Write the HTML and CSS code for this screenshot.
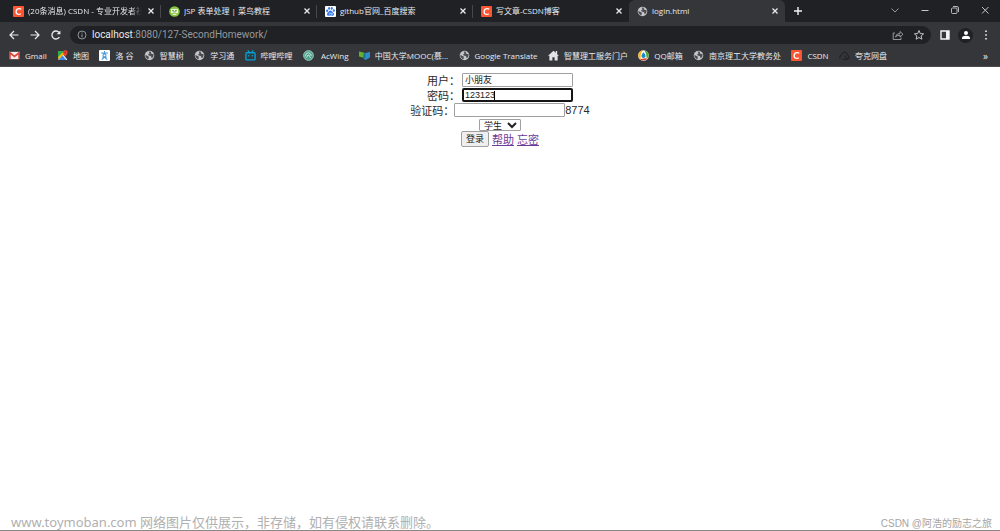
FILE: index.html
```html
<!DOCTYPE html>
<html lang="zh-CN">
<head>
<meta charset="utf-8">
<title>login.html</title>
<link rel="stylesheet" href="styles.css">
</head>
<body>
<svg class="defs" aria-hidden="true">
  <symbol id="csdn" viewBox="0 0 12 12"><rect width="12" height="12" rx="1" fill="#fc5531"/><path d="M9 3.6Q8 2.9 6.7 2.9Q3.7 2.9 3.4 6Q3.2 9.1 6 9.1Q7.5 9.1 8.5 8.4" fill="none" stroke="#fff" stroke-width="1.5"/></symbol>
  <symbol id="globe" viewBox="0 0 12 12"><circle cx="6" cy="6" r="5.2" fill="#c4c7c9"/><path d="M1.6 5.2 3.8 6.5 5.2 7.2 5 10.2 3.4 9.6 1.6 7.6ZM5 1.7 7.9 1.9 7.2 3.2 8.8 4.3 10.3 4.4 10.4 6.6 9 8.8 7.8 8.3 7.8 6.9 5.2 6 4.4 4.8 6 3.8Z" fill="#4b4d51"/></symbol>
  <symbol id="close" viewBox="0 0 8 8"><path d="M1.5 1.5 6.5 6.5M6.5 1.5 1.5 6.5" stroke="#e8eaed" stroke-width="1.3"/></symbol>
</svg>
<header class="browser">
  <div class="tabstrip">
    <div class="tab"><svg class="icon"><use href="#csdn"/></svg><span class="title fade">(20条消息) CSDN - 专业开发者社</span><button class="close" aria-label="关闭"><svg><use href="#close"/></svg></button></div>
    <div class="tab"><svg class="icon" viewBox="0 0 12 12"><circle cx="6" cy="6" r="5.8" fill="#87c540"/><path d="M2.2 3.2h7.6v4.6H2.2Z" fill="#f5fbe9"/><path d="M3.3 4.8h2.2M6.5 4.8h2.2M4 6.4h4" stroke="#4d8b2b" stroke-width=".9"/><path d="M4 9.2H8" stroke="#f5fbe9"/></svg><span class="title">JSP 表单处理 | 菜鸟教程</span><button class="close" aria-label="关闭"><svg><use href="#close"/></svg></button></div>
    <div class="tab"><svg class="icon" viewBox="0 0 12 12"><rect width="12" height="12" rx="1" fill="#fff"/><g fill="#2f79ef"><ellipse cx="2.4" cy="5.3" rx="1.2" ry="1.5"/><ellipse cx="4.5" cy="2.7" rx="1.1" ry="1.5"/><ellipse cx="7.4" cy="2.7" rx="1.1" ry="1.5"/><ellipse cx="9.7" cy="5" rx="1.1" ry="1.5"/><path d="M6 4.8C7.8 4.8 8 6.5 9.4 7.7 10.7 9 9.6 11 7.8 10.7 6.5 10.4 5.5 10.4 4.2 10.7 2.4 11 1.3 9 2.7 7.7 4 6.5 4.2 4.8 6 4.8Z"/></g><path d="M4.2 8.7H5.5V7.2M6.7 7.4V9H8V7.4" stroke="#fff" stroke-width=".6" fill="none"/></svg><span class="title">github官网_百度搜索</span><button class="close" aria-label="关闭"><svg><use href="#close"/></svg></button></div>
    <div class="tab plain"><svg class="icon"><use href="#csdn"/></svg><span class="title">写文章-CSDN博客</span><button class="close" aria-label="关闭"><svg><use href="#close"/></svg></button></div>
    <div class="tab active"><svg class="icon"><use href="#globe"/></svg><span class="title">login.html</span><button class="close" aria-label="关闭"><svg><use href="#close"/></svg></button></div>
    <button class="newtab" aria-label="新标签页"><svg viewBox="0 0 10 10"><path d="M5 1V9M1 5H9" stroke="#f1f3f4" stroke-width="1.4"/></svg></button>
    <div class="winctl">
      <button aria-label="搜索标签页"><svg viewBox="0 0 10 10"><path d="M1.5 3.5 5 7 8.5 3.5" stroke="#96989b"/></svg></button>
      <button aria-label="最小化"><svg viewBox="0 0 10 10"><path d="M1.5 5.5H8.5" stroke="#c5c7ca"/></svg></button>
      <button aria-label="还原"><svg viewBox="0 0 10 10"><rect x="1.5" y="3" width="5.5" height="5.5" rx="1" stroke="#c5c7ca" stroke-width=".9"/><path d="M3 1.5H7Q8.5 1.5 8.5 3V7" stroke="#c5c7ca" stroke-width=".9"/></svg></button>
      <button aria-label="关闭窗口"><svg viewBox="0 0 10 10"><path d="M2 2 8.5 8.5M8.5 2 2 8.5" stroke="#c5c7ca"/></svg></button>
    </div>
  </div>
  <div class="toolbar">
    <div class="nav">
      <button aria-label="后退"><svg viewBox="0 0 12 12"><path d="M10.5 6H2M6 2 2 6 6 10" stroke="#e8eaed" stroke-width="1.2"/></svg></button>
      <button aria-label="前进"><svg viewBox="0 0 12 12"><path d="M1.5 6H10M6 2 10 6 6 10" stroke="#e8eaed" stroke-width="1.2"/></svg></button>
      <button aria-label="刷新"><svg viewBox="0 0 12 12"><path d="M9.4 8A4 4 0 1 1 9 3.4L10 4.6" stroke="#e8eaed" stroke-width="1.3"/><path d="M10.4 1.5V5.3H6.6Z" fill="#e8eaed"/></svg></button>
    </div>
    <div class="address">
      <svg class="info" viewBox="0 0 10 10"><circle cx="5" cy="5" r="4" stroke="#9aa0a6" stroke-width=".9"/><path d="M5 4.4V7.3M5 2.6V3.5" stroke="#9aa0a6"/></svg>
      <span class="url"><span class="host">localhost</span>:8080/127-SecondHomework/</span>
      <button aria-label="分享"><svg viewBox="0 0 12 12"><path d="M3 4H1.2V10.5H9V8.5M3.5 8Q4 4.5 8 4.5V2.5L11 5.3 8 8V6.2Q5 6.2 3.5 8Z" stroke="#a3a5a8" stroke-width=".9"/></svg></button>
      <button aria-label="收藏"><svg viewBox="0 0 12 12"><path d="M6 1.5 7.3 4.6 10.6 4.8 8.1 7 8.9 10.2 6 8.5 3.1 10.2 3.9 7 1.4 4.8 4.7 4.6Z" stroke="#c2c4c7"/></svg></button>
    </div>
    <div class="tools">
      <button aria-label="侧边栏"><svg viewBox="0 0 12 12"><path d="M2 2H10V10H2ZM7.8 2V10" stroke="#f1f3f4" stroke-width="1.4"/><path d="M7.2 2H10V10H7.2Z" fill="#f1f3f4"/></svg></button>
      <button class="avatar" aria-label="用户"><svg viewBox="0 0 12 12"><circle cx="6" cy="4" r="2" fill="#fff"/><path d="M2 10V8.8Q2.2 6.8 6 6.8 9.8 6.8 10 8.8V10Z" fill="#fff"/></svg></button>
      <button aria-label="菜单"><svg viewBox="0 0 12 12"><path d="M5.2 1.5H6.8V3.1H5.2ZM5.2 5.2H6.8V6.8H5.2ZM5.2 8.9H6.8V10.5H5.2Z" fill="#f1f3f4"/></svg></button>
    </div>
  </div>
  <nav class="bookmarks">
    <div class="links">
    <a href="#"><svg viewBox="0 0 12 12"><path d="M1 2H11V10H1Z" fill="#f4eeee"/><path d="M1 10V3L6 7 11 3V10" fill="none" stroke="#db4437" stroke-width="1.8"/></svg>Gmail</a>
    <a href="#"><svg viewBox="0 0 12 12"><path d="M1 1H7L6 6 1 10Z" fill="#34a853"/><path d="M1 11 7 5 11 10V11Z" fill="#e8e8e8"/><path d="M2 11 6 6 10 11Z" fill="#4285f4"/><path d="M1 8 7 2 8 4 2 10Z" fill="#fbbc04"/><path d="M9 .3A2.5 2.5 0 0 1 11.5 3Q11.3 4.5 9 7.2 6.7 4.5 6.5 3A2.5 2.5 0 0 1 9 .3Z" fill="#ea4335"/><circle cx="9" cy="2.8" r=".8" fill="#8e2118"/></svg>地图</a>
    <a href="#"><svg viewBox="0 0 12 12"><rect width="12" height="12" rx="1" fill="#fff"/><path d="M2.3 3.2H9.8M6 1.2V3M4 3.5Q8.5 4 7.5 6.4L3 10.6M7 4Q3.5 5 4.5 6.5L9 10.5M3.5 8H8.5" stroke="#4a9bdd" stroke-width="1.1" fill="none"/></svg>洛 谷</a>
    <a href="#"><svg><use href="#globe"/></svg>智慧树</a>
    <a href="#"><svg><use href="#globe"/></svg>学习通</a>
    <a href="#"><svg viewBox="0 0 12 12"><rect x="1" y="3" width="10" height="7.8" rx="1" stroke="#00a1d6" stroke-width="1.5" fill="none"/><path d="M3 .5 4.7 2.5M9 .5 7.3 2.5M4 5.5V7.2M8 5.5V7.2" stroke="#00a1d6" stroke-width="1.3"/></svg>哔哩哔哩</a>
    <a href="#"><svg viewBox="0 0 12 12"><circle cx="6" cy="6" r="5.3" fill="#4ca08b" stroke="#a5d6c8"/><path d="M2.5 7Q3 3 6 3 9 3.5 9 6.5M4 8.5Q4.5 5 6.5 5.5 7 7 8.5 9" stroke="#d5eee2" fill="none"/></svg>&nbsp;AcWing</a>
    <a href="#"><svg viewBox="0 0 12 12"><path d="M0 1.5 6 3V8.8L0 7Z" fill="#62b22f"/><path d="M5 4 12 2V8.3L7 11 5 9.5Z" fill="#2d8ccd"/><path d="M5 4 6.8 3.5V9L5 9.5Z" fill="#176f83"/></svg>中国大学MOOC(慕...</a>
    <a href="#"><svg><use href="#globe"/></svg>Google Translate</a>
    <a href="#"><svg viewBox="0 0 12 12"><path d="M0 6.4 6 .8 8.5 3V1H10V4.5L12 6.4H10.5V11.5H7.2V8H4.8V11.5H1.5V6.4Z" fill="#e1e3e4"/></svg>智慧理工服务门户</a>
    <a href="#"><svg viewBox="0 0 12 12"><circle cx="6" cy="6" r="5.8" fill="#fff"/><path d="M5 .3Q0 1.8.3 6.5.8 9.5 3.5 11 1.5 6 5 .3Z" fill="#f9b51b"/><path d="M7 .3Q12 2 11.7 7L9.5 9.5Q9.5 4 7 .3Z" fill="#50a92b"/><path d="M2 10Q6 12.8 10.5 9.5L8 9Z" fill="#e4392b"/><path d="M6 2.5Q9.2 6 7.8 8 6 9.6 4.2 8 2.8 6 6 2.5Z" fill="#1687ce"/></svg>QQ邮箱</a>
    <a href="#"><svg><use href="#globe"/></svg>南京理工大学教务处</a>
    <a href="#"><svg><use href="#csdn"/></svg>CSDN</a>
    <a href="#"><svg viewBox="0 0 12 12"><path d="M1.3 9.5Q.3 7.5 2 6L4.5 3Q6 1.5 7.8 3L10.5 6.8Q11.5 8.8 9.5 10H4M5.5 6 9.5 10" stroke="#202124" stroke-width="1.1" fill="none"/></svg>夸克网盘</a>
    </div>
    <button class="more" aria-label="更多书签">»</button>
  </nav>
</header>
<main class="page">
  <form class="login">
    <div class="row"><label for="user">用户：</label> <input id="user" class="spaced" type="text" value="小朋友"></div>
    <div class="row"><label for="pwd">密码：</label> <span class="field spaced"><input id="pwd" class="focused" type="text" value="123123"><i class="caret"></i></span></div>
    <div class="row"><label for="code">验证码：</label><input id="code" type="text"><span>8774</span></div>
    <div class="row"><select aria-label="身份"><option>学生</option></select></div>
    <div class="row"><button type="button">登录</button> <a href="#">帮助</a> <a href="#">忘密</a></div>
  </form>
</main>
<footer class="marks"><span class="site">www.toymoban.com 网络图片仅供展示，非存储，如有侵权请联系删除。</span><span class="author">CSDN @阿浩的励志之旅</span></footer>
</body>
</html>
```
FILE: styles.css
```css
* { box-sizing: border-box; }
body {
  margin: 0;
  min-height: 100vh;
  display: flex;
  flex-direction: column;
  background: #fff;
  color: #2b2b2b;
  font-family: "Liberation Sans", "Noto Sans CJK SC", sans-serif;
  border-bottom: 1px solid #8b8789;
}
button { border: 0; padding: 0; background: none; color: inherit; font: inherit; }
svg { display: block; fill: none; }
.defs { position: absolute; width: 0; height: 0; }

.browser {
  background: #35363a;
  border-bottom: 1px solid #4b4a4e;
  color: #e8eaed;
  font: 8px/12px "Open Sans", "Noto Sans CJK SC", sans-serif;
}
.browser button { display: flex; align-items: center; justify-content: center; flex: none; }
.tabstrip { display: flex; height: 22px; background: #202124; padding-left: 5px; }
.tab { position: relative; display: flex; align-items: center; flex: 0 1 156px; min-width: 0; padding: 0 6px 0 8px; }
.tab::after { content: ""; position: absolute; right: 0; top: 5px; width: 1px; height: 13px; background: #47484c; }
.tab.plain::after, .tab.active::after { display: none; }
.tab.active { background: #35363a; border-radius: 6px 6px 0 0; }
.icon { width: 11px; height: 11px; flex: none; }
.title { flex: 1; min-width: 0; margin: 0 5px 0 4px; white-space: nowrap; overflow: hidden; }
.fade { mask-image: linear-gradient(to right, #000 90%, transparent); }
.close, .close svg { width: 8px; height: 8px; }
.newtab { width: 26px; }
.newtab svg { width: 10px; height: 10px; }
.winctl { display: flex; align-items: center; margin-left: auto; padding: 0 10px 2px 0; gap: 20px; }
.winctl svg { width: 10px; height: 10px; }

.toolbar { display: flex; align-items: center; height: 24px; padding: 2px 8px 0; }
.nav { display: flex; gap: 9px; width: 62px; }
.nav svg, .address button svg, .tools svg { width: 12px; height: 12px; }
.address { flex: 1; display: flex; align-items: center; gap: 9px; height: 18px; padding: 0 6px 0 7px; border-radius: 9px; background: #202124; }
.info { width: 10px; height: 10px; }
.url { flex: 1; margin-left: -4px; color: #96999d; font-family: Roboto, sans-serif; font-size: 10px; }
.host { color: #e8eaed; }
.tools { display: flex; align-items: center; gap: 7px; margin-left: 8px; }
.avatar { width: 15px; height: 15px; border-radius: 50%; background: #202124; }

.bookmarks { display: flex; align-items: center; justify-content: space-between; height: 20px; padding: 0 12px 1px 9px; white-space: nowrap; }
.links { display: flex; justify-content: space-between; flex: 0 1 878px; }
.bookmarks a { display: flex; align-items: center; gap: 5px; color: inherit; text-decoration: none; }
.bookmarks svg { width: 11px; height: 11px; flex: none; }
.more { font-size: 10px; }

.page { flex: 1; padding-top: 5px; font-size: 11px; }
.row { display: flex; justify-content: center; align-items: center; height: 15px; white-space: pre; }
.row:last-child { gap: 3px; height: 14px; }
.login input { width: 111px; height: 14px; padding: 0 2px; border: 1px solid #a0a0a0; border-radius: 1px; font: 9px "Liberation Sans", "Noto Sans CJK SC", sans-serif; color: #222; background: #fff; outline: 0; }
.login .focused { border: 2px solid #151515; border-radius: 2px; padding: 0 1px; }
.login .spaced { margin-left: 2px; }
.field { position: relative; display: flex; }
.caret { position: absolute; left: 32px; top: 3px; width: 1px; height: 9px; background: #000; }
.login select { width: 42px; height: 12px; padding: 0; border: 1px solid #a0a0a0; border-radius: 1px; background: #fff; color: #222; font: 9px/10px "Liberation Sans", "Noto Sans CJK SC", sans-serif; }
.login button { width: 28px; height: 16px; border: 1px solid #a0a0a0; border-radius: 2px; background: #efefef; color: #222; font-size: 9px; line-height: 12px; }
.login a { color: #6a3a9c; }

.marks { display: flex; justify-content: space-between; align-items: center; padding: 0 8px 0 11px; height: 16px; color: #b0b0b0; white-space: nowrap; }
.site { font: 13px/16px "Noto Sans", "Noto Sans CJK SC", sans-serif; }
.author { font-size: 10px; color: #a5a5a5; }
```
